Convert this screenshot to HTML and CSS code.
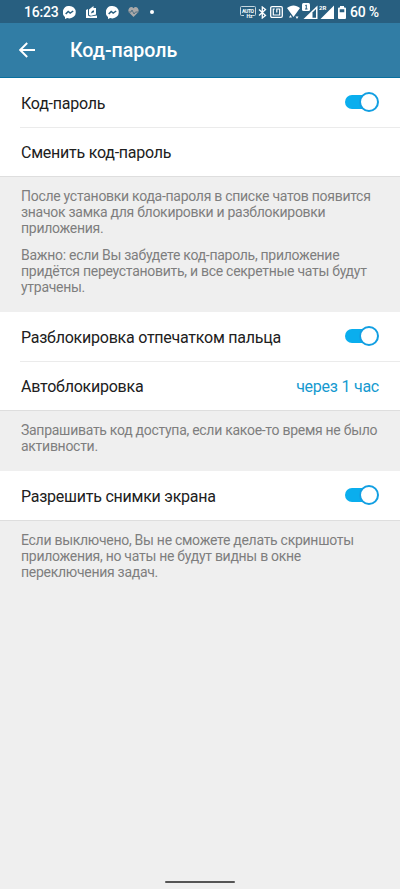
FILE: index.html
```html
<!DOCTYPE html>
<html lang="ru">
<head>
<meta charset="utf-8">
<title>Код-пароль</title>
<link rel="stylesheet" href="styles.css">
</head>
<body>
<div class="status">
  <span class="time">16:23</span>
  <svg class="messenger" width="13" height="13" viewBox="0 0 13 13"><path fill="#fff" d="M6.500 0a6.300 6.200 0 0 1 0 12.400c-.9 0-1.600-.1-2.300-.4L2 13v-2.100A6.200 6.200 0 0 1 6.500 0z"/><path d="M2.700 8.100l2.500-2.700 2 1.600 3-2" fill="none" stroke="#285f80" stroke-width="1.500"/></svg>
  <svg class="card" width="11" height="12" viewBox="0 0 11 12"><path fill="#fff" d="M0 4l2-1v6.500l2 1 7-1V12H0zM3 3.500L7.500 0v2H10v6.500l-5 1.200L3 9z"/><path d="M4.800 7.500l1.200-2.500 2-.8v2z" fill="#285f80"/></svg>
  <svg class="messenger" width="13" height="13" viewBox="0 0 13 13"><path fill="#fff" d="M6.500 0a6.300 6.200 0 0 1 0 12.400c-.9 0-1.600-.1-2.300-.4L2 13v-2.100A6.200 6.200 0 0 1 6.500 0z"/><path d="M2.700 8.100l2.500-2.700 2 1.600 3-2" fill="none" stroke="#285f80" stroke-width="1.500"/></svg>
  <svg class="heart" width="11" height="10" viewBox="0 0 11 10"><path fill="#aaa9a9" d="M5.500 10L.8 5.300C-1 2.300 3-2 5.500 1.200 8-2 12 2.300 10.200 5.300z"/><path d="M0 5h3l1-2 2 4 1.500-2H11" fill="none" stroke="#4c6c80" stroke-width=".9"/></svg>
  <i class="dot"></i>
  <div class="system">
    <svg class="auto" width="16" height="12" viewBox="0 0 16 12"><path d="M4 9.500H1.500a1 1 0 0 1-1-1v-7a1 1 0 0 1 1-1h13a1 1 0 0 1 1 1v7a1 1 0 0 1-1 1h-2" fill="none" stroke="#c5d6df"/><text x="2" y="6.800" class="auto-label" textLength="12">AUTO</text><text x="6.500" y="11.500" class="auto-label">Hz</text></svg>
    <svg class="bluetooth" width="9" height="13" viewBox="0 0 9 13"><path d="M1 3.500l6.500 6-3.200 2.500V1l3.200 2.500-6.500 6" fill="none" stroke="#fff" stroke-width="1.300"/></svg>
    <svg class="nfc" width="13" height="12" viewBox="0 0 13 12"><rect x=".7" y=".7" width="11.600" height="10.600" rx="1.300" fill="none" stroke="#fff" stroke-width="1.300"/><path d="M4.800 3H3.300v6h6.400V3H6.800v3.500" fill="none" stroke="#fff" stroke-width="1.200"/></svg>
    <svg class="wifi" width="14" height="15" viewBox="0 0 14 15"><path fill="#fff" d="M0 3C4-.5 9-.5 13 3L6.500 12zM2 12.500L3.500 10 5 12.500zM8.500 11.500h3L10 14z"/></svg>
    <svg class="signal" width="17" height="18" viewBox="0 0 17 18"><path d="M1.500 16L15.500 2.500V16z" fill="#fff"/><path d="M10.500 14.800V9.500L14 6v8.800z" fill="#285f80"/><rect width="8" height="8" rx="1.500" fill="#fff"/><path d="M3.300 2.500l1-.5v4M3 6h2.500" fill="none" stroke="#285f80"/></svg>
    <svg class="signal" width="16" height="18" viewBox="0 0 16 18"><path d="M1.500 16L15 2.500V16z" fill="#fff"/><text x="0" y="7" class="sim">2R</text></svg>
    <svg class="battery" width="8" height="13" viewBox="0 0 8 13"><path fill="#fff" fill-rule="evenodd" d="M2 0h4v1.500h1a1 1 0 0 1 1 1V12a1 1 0 0 1-1 1H1a1 1 0 0 1-1-1V2.500a1 1 0 0 1 1-1h1zM1.700 3.200v3h4.600v-3z"/></svg>
    <span class="percent">60 %</span>
  </div>
</div>
<header class="bar">
  <svg width="16" height="16" viewBox="0 0 16 16"><path d="M16 8H1.500M8.200 1L1.200 8l7 7" fill="none" stroke="#fff" stroke-width="1.900"/></svg>
  <h1>Код-пароль</h1>
</header>
<main>
  <section class="group">
    <div class="row"><span>Код-пароль</span><i class="switch"></i></div>
    <div class="row"><span>Сменить код-пароль</span></div>
  </section>
  <div class="note first">
    <p>После установки кода-пароля в списке чатов появится<br>значок замка для блокировки и разблокировки<br>приложения.</p>
    <p>Важно: если Вы забудете код-пароль, приложение<br>придётся переустановить, и все секретные чаты будут<br>утрачены.</p>
  </div>
  <section class="group">
    <div class="row"><span>Разблокировка отпечатком пальца</span><i class="switch"></i></div>
    <div class="row"><span>Автоблокировка</span><span class="value">через 1 час</span></div>
  </section>
  <div class="note second">
    <p>Запрашивать код доступа, если какое-то время не было<br>активности.</p>
  </div>
  <section class="group single">
    <div class="row"><span>Разрешить снимки экрана</span><i class="switch"></i></div>
  </section>
  <div class="note">
    <p>Если выключено, Вы не сможете делать скриншоты<br>приложения, но чаты не будут видны в окне<br>переключения задач.</p>
  </div>
</main>
<div class="home"></div>
</body>
</html>
```
FILE: styles.css
```css
*, *::before, *::after { box-sizing: border-box; }
body {
  margin: 0;
  height: 889px;
  display: flex;
  flex-direction: column;
  overflow: hidden;
  background: #efefef;
  font-family: Roboto, "Liberation Sans", sans-serif;
  color: #202020;
}
svg { display: block; flex: none; }
.status {
  height: 23px;
  flex: none;
  display: flex;
  align-items: center;
  padding: 1px 21px 0 24px;
  background: #285f80;
  color: #fff;
  font-size: 14px;
  letter-spacing: -.2px;
  font-weight: 500;
  white-space: nowrap;
}
.time { width: 39px; }
.card { margin: 0 9px 0 10px; }
.heart { margin-left: 9px; }
.dot { width: 4px; height: 4px; margin-left: 11px; border-radius: 50%; background: #fff; }
.system { display: flex; align-items: center; margin-left: auto; }
.auto-label { font-size: 5px; font-weight: 700; letter-spacing: 0; fill: #fff; }
.sim { font-size: 6px; font-weight: 700; letter-spacing: 0; fill: #fff; }
.bluetooth { margin: 0 3px 0 2px; }
.wifi { margin: 0 1px 0 4px; }
.battery { margin: 0 4px 0 3px; }
.percent { width: 29px; }
.bar {
  height: 55px;
  flex: none;
  display: flex;
  align-items: center;
  gap: 35px;
  padding: 0 0 0 19px;
  background: #317da5;
  border-bottom: 1px solid #08709f;
}
.bar h1 { margin: 1px 0 0; color: #fff; font-size: 19.6px; font-weight: 500; }
.group { background: #fff; height: 99px; border-bottom: 1px solid #dedede; }
.group.single { height: 50px; }
.row {
  height: 49px;
  display: flex;
  align-items: center;
  justify-content: space-between;
  margin-left: 20px;
  padding: 1px 21px 0 1px;
  font-size: 16px;
  letter-spacing: -.24px;
  white-space: nowrap;
}
.row + .row { border-top: 1px solid #ebebeb; padding-top: 0; }
.value { color: #169ad0; }
.switch {
  position: relative;
  width: 34px;
  height: 14px;
  margin-top: -3px;
}
.switch::before {
  content: "";
  display: block;
  width: 28px;
  height: 14px;
  border-radius: 7px;
  background: #0aaeee;
}
.switch::after {
  content: "";
  position: absolute;
  right: 0;
  top: -3px;
  width: 20px;
  height: 20px;
  border: 2px solid #129fe2;
  border-radius: 50%;
  background: #fff;
}
.note {
  padding: 11px 20px 0 21px;
  color: #7e7e7e;
  font-size: 14px;
  letter-spacing: -.28px;
  line-height: 16px;
  white-space: nowrap;
}
.note p { margin: 0 0 11px; }
.note.first { height: 135px; }
.note.second { height: 60px; }
.home { width: 70px; height: 2px; margin: auto auto 6px; background: #555; border-radius: 1px; }
```
